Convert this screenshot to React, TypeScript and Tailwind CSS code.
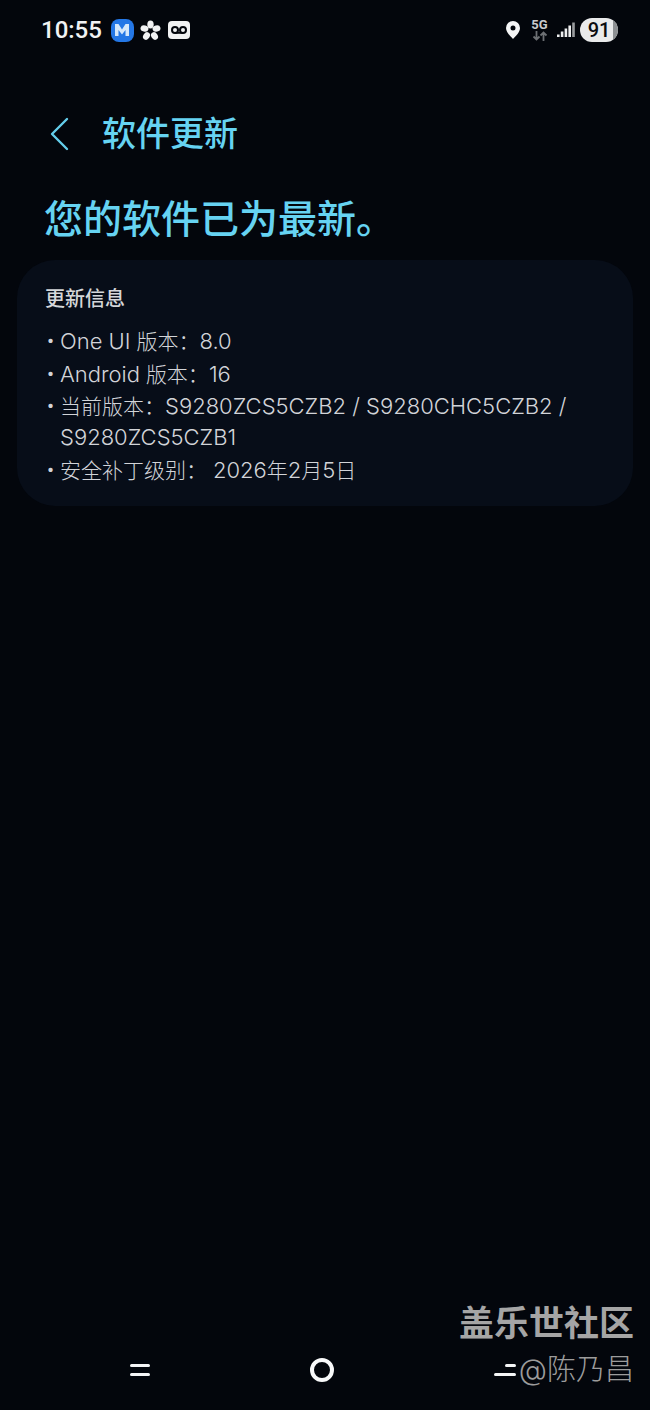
const cjk = "font-['Roboto','Noto_Sans_CJK_SC',sans-serif]";
const body = "font-['Inter','Noto_Sans_CJK_SC',sans-serif]";

function StatusBar() {
  return (
    <div className="flex h-[60px] items-center justify-between pl-[41px] pr-[32px]">
      <div className="flex items-center">
        <span className="text-[24px] font-medium leading-none text-[#f1f2f3]">10:55</span>
        <div className="ml-[9px] flex h-[23px] w-[23px] items-center justify-center rounded-[8px] bg-[#2477e6]">
          <svg width="16" height="14" viewBox="0 0 16 14">
            <path d="M1 13V1h3.500L8 6.500 11.500 1H15v12h-3.500V7L8 11.500 4.500 7v6z" fill="#d5e8fb" />
          </svg>
        </div>
        <svg className="ml-[6px]" width="21" height="21" viewBox="0 0 21 21" fill="#f1f2f3">
          <ellipse cx="10.500" cy="4.500" rx="3.200" ry="4" />
          <ellipse cx="4.500" cy="8.500" rx="4" ry="3.200" transform="rotate(15 4.500 8.500)" />
          <ellipse cx="16.500" cy="8.500" rx="4" ry="3.200" transform="rotate(-15 16.500 8.500)" />
          <ellipse cx="6.500" cy="16" rx="3.200" ry="4" transform="rotate(35 6.500 16)" />
          <ellipse cx="14.500" cy="16" rx="3.200" ry="4" transform="rotate(-35 14.500 16)" />
        </svg>
        <svg className="ml-[7px]" width="22" height="20" viewBox="0 0 22 20">
          <rect x="0" y="1" width="22" height="18" rx="4" fill="#f1f2f3" />
          <circle cx="7" cy="10" r="3" fill="none" stroke="#03060c" strokeWidth="2" />
          <circle cx="15" cy="10" r="3" fill="none" stroke="#03060c" strokeWidth="2" />
          <rect x="7" y="12" width="8" height="1.800" fill="#03060c" />
        </svg>
      </div>
      <div className="flex items-center">
        <svg width="16" height="20" viewBox="0 0 16 20">
          <path fillRule="evenodd" d="M8 1a7 7 0 0 1 7 7c0 4-4 8-7 11-3-3-7-7-7-11a7 7 0 0 1 7-7zm0 4.500a2.500 2.500 0 1 0 0 5 2.500 2.500 0 0 0 0-5z" fill="#f4f5f6" />
        </svg>
        <div className="ml-[10px] flex w-[17px] flex-col items-center">
          <span className="text-[13px] font-bold leading-[12px] text-[#c9cbcd]">5G</span>
          <svg width="16" height="10" viewBox="0 0 16 10" fill="none" stroke="#6d7074" strokeWidth="1.800">
            <path d="M4.500 0v8M1.500 5.500l3 3 3-3M11.500 10V2M8.500 4.500l3-3 3 3" />
          </svg>
        </div>
        <svg className="ml-[9px]" width="18" height="16" viewBox="0 0 18 16" fill="#eeeff0">
          <rect x="0" y="12.500" width="2.600" height="2.500" />
          <rect x="3.800" y="9.500" width="2.600" height="5.500" />
          <rect x="7.600" y="6.500" width="2.600" height="8.500" />
          <rect x="11.400" y="3.500" width="2.600" height="11.500" />
          <rect x="15.200" y="0.500" width="2.600" height="14.500" fill="#9a9c9f" />
        </svg>
        <div className="relative ml-[5px] flex h-[24px] w-[38px] items-center justify-center overflow-hidden rounded-full bg-[#e9eaeb]">
          <div className="absolute inset-y-0 right-0 w-[5px] bg-[#8d9093]" />
          <span className="relative text-[20px] font-medium leading-none text-[#0a0c10]">91</span>
        </div>
      </div>
    </div>
  );
}

function InfoLine({ children }: { children: React.ReactNode }) {
  return (
    <li className="mb-[1.5px] flex text-[21px] font-light leading-[31px] text-[#d2d4d8]">
      <span className={`w-[15px] shrink-0 pl-[2px] font-normal ${cjk}`}>•</span>
      <span>{children}</span>
    </li>
  );
}

// latin runs sit a touch larger than the CJK next to them
function L({ children }: { children: React.ReactNode }) {
  return <span className="text-[22px]">{children}</span>;
}

export default function App() {
  return (
    <div className={`relative flex h-[1410px] w-[650px] flex-col overflow-hidden bg-[#03060c] ${cjk}`}>
      <StatusBar />

      <div className="mt-[52px] flex h-[44px] items-center pl-[50px]">
        <svg width="20" height="34" viewBox="0 0 20 34" fill="none" stroke="#63cdeb" strokeWidth="2.400" strokeLinecap="round" strokeLinejoin="round">
          <path d="M17 2L2 17l15 15" />
        </svg>
        <h1 className="ml-[32px] text-[34px] font-medium leading-none text-[#66d3f2]">软件更新</h1>
      </div>

      <h2 className="mt-[39px] pl-[44px] text-[39px] font-medium leading-[50px] text-[#66d3f2]">您的软件已为最新。</h2>

      <section className={`mx-[17px] mt-[15px] h-[246px] rounded-[38px] bg-[#070d18] px-[28px] pt-[25px] ${body}`}>
        <h3 className="text-[20px] font-medium leading-[28px] text-[#d5d7da]">更新信息</h3>
        <ul className="mt-[13px]">
          <InfoLine><L>One UI</L> 版本：<L>8.0</L></InfoLine>
          <InfoLine><L>Android</L> 版本：<L>16</L></InfoLine>
          <InfoLine>
            当前版本：<L>S9280ZCS5CZB2 / S9280CHC5CZB2 /</L>
            <br />
            <L>S9280ZCS5CZB1</L>
          </InfoLine>
          <InfoLine>安全补丁级别： <L>2026</L>年<L>2</L>月<L>5</L>日</InfoLine>
        </ul>
      </section>

      <nav className="mt-auto flex h-[70px] items-start justify-between pl-[130px] pr-[134px] pt-[18px]">
        <div className="flex w-[20px] flex-col gap-[6px] pt-[6px]">
          <div className="h-[3px] rounded-full bg-[#f4f5f6]" />
          <div className="h-[3px] rounded-full bg-[#f4f5f6]" />
        </div>
        <div className="h-[24px] w-[24px] rounded-full border-[4px] border-[#f8f9fa]" />
        <div className="flex w-[22px] flex-col items-end gap-[6px] pt-[6px]">
          <div className="h-[3px] w-[11px] rounded-full bg-[#f4f5f6]" />
          <div className="h-[3px] w-[22px] rounded-full bg-[#f4f5f6]" />
        </div>
      </nav>

      <div className="absolute right-[16px] top-[1305px] flex flex-col items-end">
        <span className="text-[35px] font-bold leading-[40px] text-[#a5a5a5]">盖乐世社区</span>
        <span className={`mt-[8px] text-[29px] font-light leading-[34px] text-[#9c9c9c] ${body}`}>@陈乃昌</span>
      </div>
    </div>
  );
}
